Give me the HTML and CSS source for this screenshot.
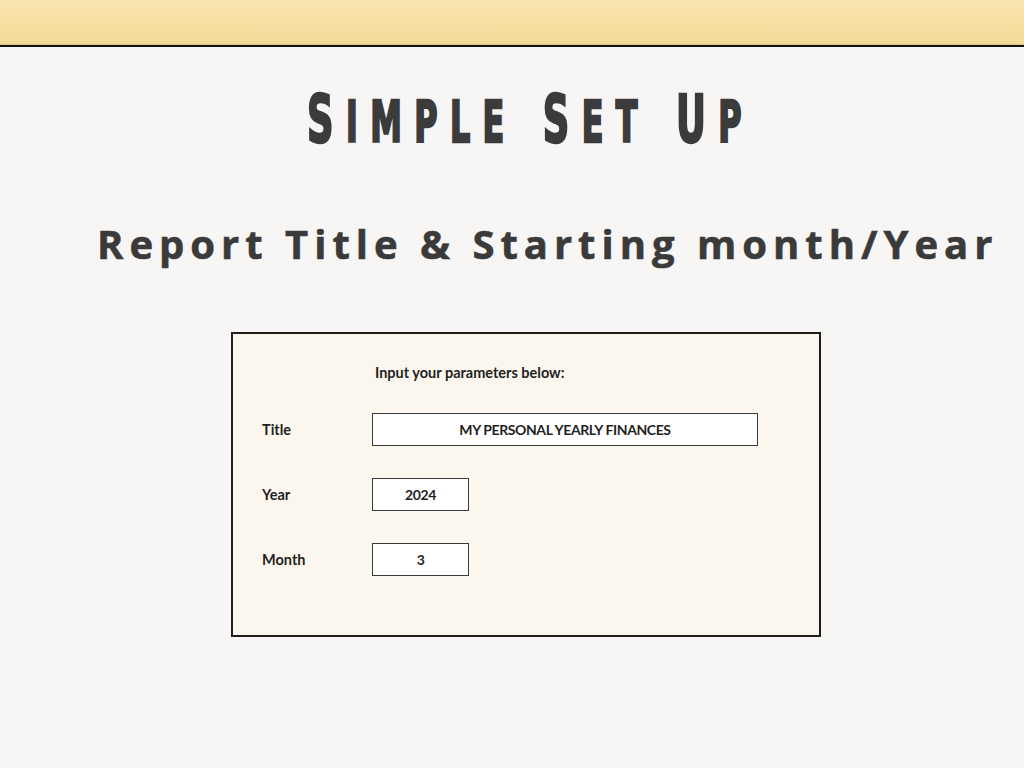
FILE: index.html
```html
<!DOCTYPE html>
<html>
<head>
<meta charset="utf-8">
<link rel="stylesheet" href="styles.css">
</head>
<body>
<header class="topbar"></header>
<main class="page">
  <h1 class="title"><span class="cap">S</span><span class="sc">imple</span> <span class="cap">S</span><span class="sc">et</span> <span class="cap">U</span><span class="sc">p</span></h1>
  <h2 class="subtitle">Report Title &amp; Starting month/Year</h2>
  <section class="card">
    <div class="intro">Input your parameters below:</div>
    <div class="row">
      <div class="label">Title</div>
      <div class="field field-wide">MY PERSONAL YEARLY FINANCES</div>
    </div>
    <div class="row">
      <div class="label">Year</div>
      <div class="field field-small">2024</div>
    </div>
    <div class="row">
      <div class="label">Month</div>
      <div class="field field-small">3</div>
    </div>
  </section>
</main>
</body>
</html>
```
FILE: styles.css
```css
html, body {
  margin: 0;
  padding: 0;
}
body {
  background: #f7f6f4;
  width: 1024px;
  height: 768px;
  overflow: hidden;
  color: #3a3a3a;
}
.topbar {
  height: 44px;
  background: linear-gradient(#fae4b0, #f4da97);
  border-bottom: 1px solid #e2c67c;
  box-shadow: 0 2px 0 #111;
}
.page {
  display: flex;
  flex-direction: column;
  align-items: flex-start;
}
.title {
  margin: 42px 0 0 307px;
  font-family: "DejaVu Sans Condensed", "DejaVu Sans", sans-serif;
  font-weight: bold;
  line-height: 66px;
  height: 66px;
  letter-spacing: 20px;
  word-spacing: 12px;
  color: #3b3b3b;
  -webkit-text-stroke: 2.4px #3b3b3b;
  white-space: nowrap;
  transform: scaleX(0.62);
  transform-origin: left center;
}
.title .cap {
  font-size: 66px;
}
.title .sc {
  font-size: 57px;
  text-transform: uppercase;
}
.subtitle {
  margin: 71px 0 0 97px;
  font-family: "Open Sans", sans-serif;
  font-weight: 700;
  font-size: 40px;
  line-height: 1;
  letter-spacing: 6px;
  color: #3a3a3a;
  -webkit-text-stroke: 0.6px #3a3a3a;
  white-space: nowrap;
}
.card {
  margin: 68px 0 0 231px;
  width: 586px;
  height: 301px;
  border: 2px solid #1e1e1e;
  background: #fbf7ee;
  font-family: "Lato", sans-serif;
  font-weight: 700;
  font-size: 14.5px;
  color: #1f1f24;
  display: flex;
  flex-direction: column;
  gap: 32px;
}
.intro {
  margin: 31px 0 0 142px;
  line-height: 16px;
  height: 16px;
}
.row {
  display: flex;
  align-items: center;
  height: 33px;
}
.label {
  width: 110px;
  padding-left: 29px;
}
.field {
  height: 31px;
  border: 1px solid #3a3a3a;
  background: #fff;
  display: flex;
  align-items: center;
  justify-content: center;
  font-size: 14px;
  letter-spacing: -0.4px;
}
.field-wide {
  width: 384px;
}
.field-small {
  width: 95px;
}
```
